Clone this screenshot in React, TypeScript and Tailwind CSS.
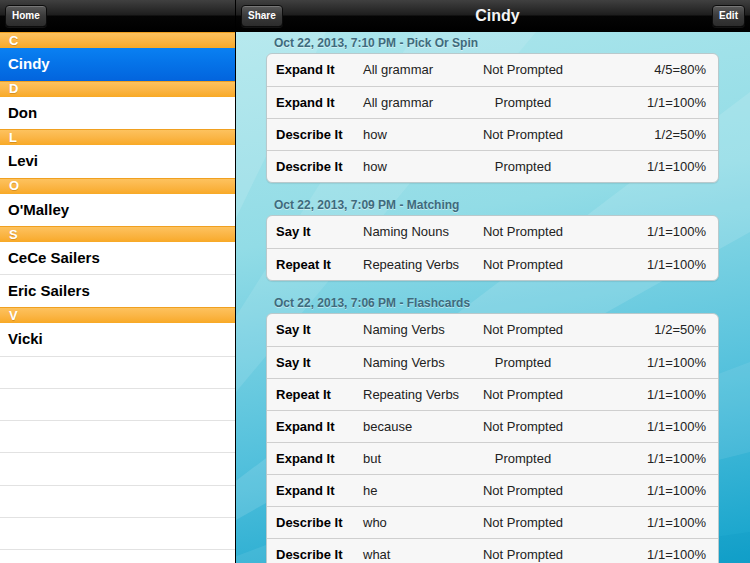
import React from 'react';

type Row = { game: string; target: string; prompt: string; score: string };
type Session = { title: string; rows: Row[] };

const sessions: Session[] = [
  {
    title: 'Oct 22, 2013, 7:10 PM - Pick Or Spin',
    rows: [
      { game: 'Expand It', target: 'All grammar', prompt: 'Not Prompted', score: '4/5=80%' },
      { game: 'Expand It', target: 'All grammar', prompt: 'Prompted', score: '1/1=100%' },
      { game: 'Describe It', target: 'how', prompt: 'Not Prompted', score: '1/2=50%' },
      { game: 'Describe It', target: 'how', prompt: 'Prompted', score: '1/1=100%' },
    ],
  },
  {
    title: 'Oct 22, 2013, 7:09 PM - Matching',
    rows: [
      { game: 'Say It', target: 'Naming Nouns', prompt: 'Not Prompted', score: '1/1=100%' },
      { game: 'Repeat It', target: 'Repeating Verbs', prompt: 'Not Prompted', score: '1/1=100%' },
    ],
  },
  {
    title: 'Oct 22, 2013, 7:06 PM - Flashcards',
    rows: [
      { game: 'Say It', target: 'Naming Verbs', prompt: 'Not Prompted', score: '1/2=50%' },
      { game: 'Say It', target: 'Naming Verbs', prompt: 'Prompted', score: '1/1=100%' },
      { game: 'Repeat It', target: 'Repeating Verbs', prompt: 'Not Prompted', score: '1/1=100%' },
      { game: 'Expand It', target: 'because', prompt: 'Not Prompted', score: '1/1=100%' },
      { game: 'Expand It', target: 'but', prompt: 'Prompted', score: '1/1=100%' },
      { game: 'Expand It', target: 'he', prompt: 'Not Prompted', score: '1/1=100%' },
      { game: 'Describe It', target: 'who', prompt: 'Not Prompted', score: '1/1=100%' },
      { game: 'Describe It', target: 'what', prompt: 'Not Prompted', score: '1/1=100%' },
    ],
  },
];

const groups: { letter: string; names: string[] }[] = [
  { letter: 'C', names: ['Cindy'] },
  { letter: 'D', names: ['Don'] },
  { letter: 'L', names: ['Levi'] },
  { letter: 'O', names: ["O'Malley"] },
  { letter: 'S', names: ['CeCe Sailers', 'Eric Sailers'] },
  { letter: 'V', names: ['Vicki'] },
];

function BarButton({ label }: { label: string }) {
  return (
    <div className="h-[22px] px-[6px] flex items-center rounded-[4px] border border-[#0c0c0c] bg-gradient-to-b from-[#5a5a5a] via-[#3a3a3a] to-[#2c2c2c] shadow-[inset_0_1px_0_rgba(255,255,255,0.18),0_1px_0_rgba(255,255,255,0.08)] text-white text-[10px] font-bold">
      {label}
    </div>
  );
}

const navBar = 'h-[32px] shrink-0 flex items-center bg-[linear-gradient(#404040,#1e1e1e_48%,#050505_52%,#000)] border-b border-black';

export default function App() {
  return (
    <div className="w-[750px] h-[563px] flex overflow-hidden font-['Liberation_Sans',Arial,sans-serif]">
      {/* master list */}
      <div className="w-[235px] shrink-0 flex flex-col bg-white">
        <div className={navBar + ' px-[5px]'}>
          <BarButton label="Home" />
        </div>
        {groups.map((g) => (
          <div key={g.letter}>
            <div className="h-[16px] flex items-center pl-[9px] bg-gradient-to-b from-[#fdc25e] to-[#f8a925] border-t border-[#f0a020] text-white text-[13px] font-bold [text-shadow:0_1px_0_rgba(150,90,0,0.35)]">
              {g.letter}
            </div>
            {g.names.map((n, i) =>
              n === 'Cindy' ? (
                <div key={n} className="h-[32.5px] flex items-center pl-[8px] bg-gradient-to-b from-[#0a80f2] to-[#0364dd] text-white text-[15px] font-bold">
                  {n}
                </div>
              ) : (
                <div key={n} className={'h-[32.5px] flex items-center pl-[8px] text-black text-[15px] font-bold' + (i < g.names.length - 1 ? ' border-b border-[#e2e2e2]' : '')}>
                  {n}
                </div>
              )
            )}
          </div>
        ))}
        {Array.from({ length: 7 }).map((_, i) => (
          <div key={i} className="h-[32.3px] shrink-0 border-t border-[#e2e2e2]" />
        ))}
      </div>

      <div className="w-[1px] shrink-0 bg-black" />

      {/* detail */}
      <div className="flex-1 flex flex-col relative">
        <div className={navBar + ' justify-between px-[5px] relative z-10'}>
          <BarButton label="Share" />
          <div className="text-[#f4f4f4] text-[16px] font-bold">Cindy</div>
          <BarButton label="Edit" />
        </div>
        <div className="flex-1 relative overflow-hidden bg-[linear-gradient(170deg,#ade6ec_0%,#92dce6_35%,#52c0dc_70%,#12a2cb_100%)]">
          <svg className="absolute inset-0" width="514" height="531" viewBox="0 0 514 531">
            <polygon points="-200,600 0,0 90,0" fill="white" opacity="0.12" />
            <polygon points="-200,600 180,0 300,0" fill="white" opacity="0.10" />
            <polygon points="-200,600 514,60 514,200" fill="white" opacity="0.12" />
            <polygon points="-200,600 514,330 514,420" fill="white" opacity="0.08" />
            <polygon points="-200,600 514,500 514,560" fill="#0a8fba" opacity="0.15" />
          </svg>
          <div className="relative">
            {sessions.map((s, si) => (
              <div key={si} className={si === 0 ? '' : 'pt-[11px]'}>
                <div className="h-[21px] flex items-center pl-[38px] text-[12px] font-bold text-[#3f6a7c] [text-shadow:0_1px_0_rgba(255,255,255,0.45)]">
                  {s.title}
                </div>
                <div className="ml-[30px] w-[453px] rounded-[6px] border border-[#b9c9cc] bg-[#f7f7f7] overflow-hidden shadow-[0_1px_1px_rgba(0,0,0,0.08)]">
                  {s.rows.map((r, ri) => (
                    <div
                      key={ri}
                      className={'h-[32px] flex items-center text-[13px] text-[#222]' + (ri > 0 ? ' border-t border-[#cfcfcf]' : '')}
                    >
                      <div className="w-[96px] shrink-0 pl-[9px] font-bold text-black">{r.game}</div>
                      <div className="w-[100px] shrink-0">{r.target}</div>
                      <div className="w-[120px] shrink-0 text-center">{r.prompt}</div>
                      <div className="flex-1 text-right pr-[12px]">{r.score}</div>
                    </div>
                  ))}
                </div>
              </div>
            ))}
          </div>
        </div>
      </div>
    </div>
  );
}
